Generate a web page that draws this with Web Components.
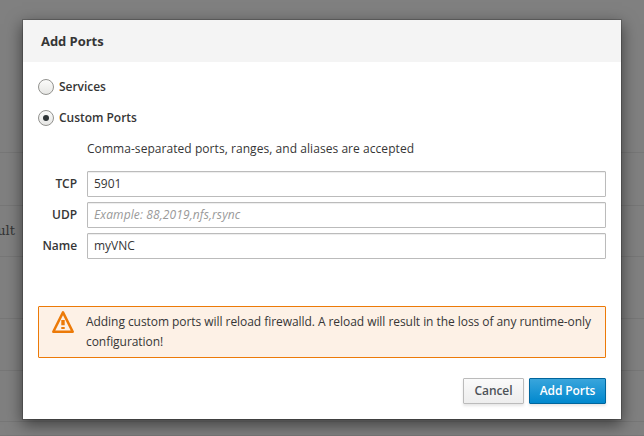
<!DOCTYPE html>
<html lang="en">
<head>
<meta charset="utf-8">
<title>Add Ports</title>
<style>
html,body{margin:0;height:100%;overflow:hidden}
body{font:12px/20px "Open Sans","Noto Sans",sans-serif;color:#363636;background:#808080}
</style>
</head>
<body>
<firewall-page>
  <modal-dialog heading="Add Ports">
    <radio-option>Services</radio-option>
    <radio-option checked>Custom Ports</radio-option>
    <port-form>
      <span slot="hint">Comma-separated ports, ranges, and aliases are accepted</span>
      <form-field label="TCP" value="5901"></form-field>
      <form-field label="UDP" hint="Example: 88,2019,nfs,rsync"></form-field>
      <form-field label="Name" value="myVNC"></form-field>
    </port-form>
    <warning-alert>Adding custom ports will reload firewalld. A reload will result in the loss of any runtime-only configuration!</warning-alert>
    <push-button slot="footer" style="width:61px">Cancel</push-button>
    <push-button slot="footer" primary style="width:77px">Add Ports</push-button>
  </modal-dialog>
</firewall-page>
<script>
class Base extends HTMLElement {
  constructor() { super(); this.attachShadow({mode: 'open'}); }
  connectedCallback() { this.shadowRoot.innerHTML = this.render(); }
}

customElements.define('firewall-page', class extends Base {
  render() { return `<style>
    :host{display:block;position:relative;height:436px;overflow:hidden;background:#808080}
    .rows{display:grid;grid-template-rows:153px 53px 51px 62px 52px 51px 14px}
    .rows div{box-sizing:border-box;border-bottom:1px solid #777}
    .cell{font:13px/49px "DejaVu Serif",serif;color:#333;display:flex}
    .cell span{width:15px;display:flex;justify-content:flex-end;white-space:nowrap}
    ::slotted(modal-dialog){position:absolute;left:22px;top:19px}
  </style>
  <div class="rows"><div></div><div></div><div class="cell"><span>ult</span></div><div></div><div></div><div></div><div></div></div>
  <slot></slot>`; }
});

customElements.define('modal-dialog', class extends Base {
  render() { return `<style>
    :host{display:flex;flex-direction:column;box-sizing:border-box;width:600px;height:401px;border:1px solid rgba(3,3,3,.2);background:#fff;background-clip:padding-box;box-shadow:0 5px 15px rgba(0,0,0,.5)}
    header{height:42px;background:#f4f4f4;padding:0 18px;font-size:13px;font-weight:700;line-height:43px;box-sizing:border-box;letter-spacing:-.05px}
    main{padding:15px 15px 0;flex:1;display:flex;flex-direction:column}
    footer{display:flex;justify-content:flex-end;gap:5px;padding:0 15px 15px}
  </style><header>${this.getAttribute('heading')}</header><main><slot></slot></main><footer><slot name="footer"></slot></footer>`; }
});

customElements.define('radio-option', class extends Base {
  render() { return `<style>
    :host{display:flex;align-items:center;gap:5px;height:20px;margin-bottom:11px;font-weight:600;letter-spacing:-.03px}
    i{box-sizing:border-box;width:16px;height:16px;border:1px solid #92928f;border-radius:50%;background:linear-gradient(#fbfbfa,#e6e6e4);display:flex;align-items:center;justify-content:center}
    :host([checked]) i::after{content:"";width:6px;height:6px;border-radius:50%;background:#2e3436}
  </style><i></i><slot></slot>`; }
});

customElements.define('port-form', class extends Base {
  render() { return `<style>
    :host{display:flex;flex-direction:column;gap:5px}
    .hint{padding-left:49px;height:27px;letter-spacing:.055px}
  </style><div class="hint"><slot name="hint"></slot></div><slot></slot>`; }
});

customElements.define('form-field', class extends Base {
  render() {
    const value = this.getAttribute('value'), hint = this.getAttribute('hint');
    return `<style>
    :host{display:grid;grid-template-columns:39px 1fr;column-gap:10px}
    label{font-weight:600;text-align:right;line-height:26px;letter-spacing:-.05px}
    div{box-sizing:border-box;height:26px;border:1px solid #bbb;padding:0 6px;line-height:24px;box-shadow:inset 0 1px 1px rgba(3,3,3,.075);border-radius:1px}
    .hint{color:#999;font-style:italic;letter-spacing:.11px}
  </style><label>${this.getAttribute('label')}</label><div class="${hint ? 'hint' : ''}">${value || hint}</div>`; }
});

customElements.define('warning-alert', class extends Base {
  render() { return `<style>
    :host{display:flex;box-sizing:border-box;height:52px;margin-top:47px;padding:5px 4px 0 13px;border:1px solid #ec7a08;background:#fdf1e6;border-radius:1px}
    svg{width:22px;height:22px;flex:none;margin:-1px 12px 0 0}
    p{margin:0;letter-spacing:-.055px}
  </style><svg viewBox="0 0 22 22"><path d="M11 1.4 20.7 20.7H1.3Z" fill="none" stroke="#ec7a08" stroke-width="2.5" stroke-linejoin="round"/><path d="M9.3 9h3.4v5.2H9.3zM9.3 15.9h3.4v2H9.3z" fill="#ec7a08"/></svg><p><slot></slot></p>`; }
});

customElements.define('push-button', class extends Base {
  render() { return `<style>
    :host{display:block;box-sizing:border-box;height:26px;text-align:center;border:1px solid #bbb;border-radius:1px;background:linear-gradient(#fafafa,#ededed);color:#4d5258;font-weight:600;line-height:24px;letter-spacing:-.1px;box-shadow:0 2px 3px rgba(3,3,3,.1);white-space:nowrap}
    :host([primary]){border-color:#00659c;background:linear-gradient(#39a5dc,#0088ce);color:#fff}
  </style><slot></slot>`; }
});
</script>
</body>
</html>
